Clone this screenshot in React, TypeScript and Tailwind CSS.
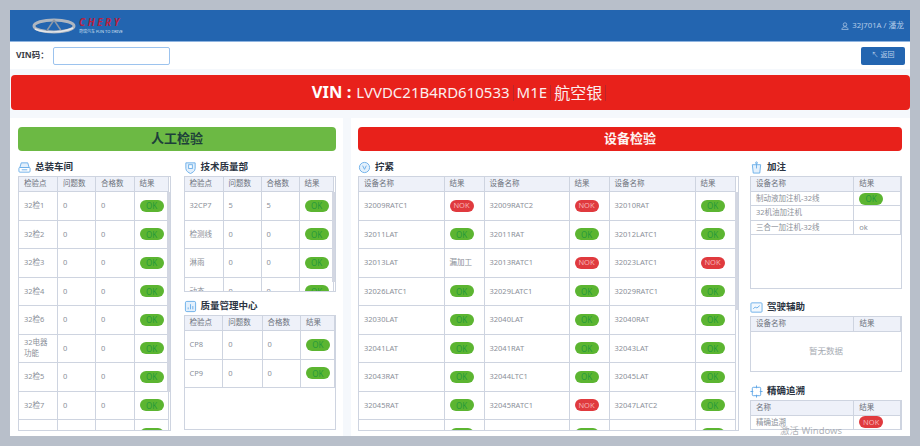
import React from 'react';

type Cell = string | { pill: 'OK' | 'NOK' };

const OK: Cell = { pill: 'OK' };
const NOK: Cell = { pill: 'NOK' };

function Pill({ kind }: { kind: 'OK' | 'NOK' }) {
  if (kind === 'OK') {
    return <span className="flex h-[12px] w-[24px] items-center justify-center rounded-full bg-[#5cb531] text-[8px] text-[#279a3c]">OK</span>;
  }
  return <span className="flex h-[12px] w-[24px] items-center justify-center rounded-full bg-[#e03a3e] text-[7.5px] text-[#f6b4b4]">NOK</span>;
}

function DataTable({ cols, head, rows, rowClass, boxClass, bar }: {
  cols: string[];
  head: string[];
  rows: Cell[][];
  rowClass: string;
  boxClass: string;
  bar?: string;
}) {
  return (
    <div className={`relative overflow-hidden border border-[#ced4e0] bg-white ${boxClass}`}>
      <table className="table-fixed border-collapse text-[7.5px] text-[#8b9099]">
        <colgroup>
          {cols.map((c, i) => <col key={i} className={c} />)}
        </colgroup>
        <thead>
          <tr className="h-[14.500px] bg-[#eef1f9] text-[#6d727c]">
            {head.map((h, i) => (
              <th key={i} className="border-r border-b border-[#ced4e0] pl-[5px] text-left font-normal">{h}</th>
            ))}
          </tr>
        </thead>
        <tbody>
          {rows.map((r, i) => (
            <tr key={i} className={rowClass}>
              {r.map((c, j) => (
                <td key={j} className="border-r border-b border-[#ced4e0] pl-[5px] pr-[4px] leading-[11px]">
                  {typeof c === 'string' ? c : <Pill kind={c.pill} />}
                </td>
              ))}
            </tr>
          ))}
        </tbody>
      </table>
      {bar && <div className={`absolute right-0 top-[15px] w-[3px] bg-[#d3d7e2] ${bar}`} />}
    </div>
  );
}

function Title({ icon, text }: { icon: React.ReactNode; text: string }) {
  return (
    <div className="flex h-[20px] items-center gap-[4px] pt-[2px] text-[9.5px] font-bold text-[#2b3442]">
      {icon}
      <span>{text}</span>
    </div>
  );
}

const iconClass = 'h-[13px] w-[13px] shrink-0 fill-[#e3f0fc] stroke-[#6aaee8]';

const BoxIcon = (
  <svg viewBox="0 0 14 14" className={iconClass} strokeWidth="1">
    <path d="M3.5 2h7L12 7H2z" />
    <rect x="1" y="7" width="12" height="5" rx="1" fill="#fff" />
    <path d="M4 9.5h6" />
  </svg>
);
const ShieldIcon = (
  <svg viewBox="0 0 14 14" className={iconClass} strokeWidth="1">
    <path d="M2 2h10v6c0 3-3 4.500-5 5.500C5 12.500 2 11 2 8z" />
    <rect x="5" y="4" width="4" height="4" fill="#fff" />
  </svg>
);
const ChartIcon = (
  <svg viewBox="0 0 14 14" className={iconClass} strokeWidth="1">
    <rect x="1.500" y="1.500" width="11" height="11" rx="1.500" />
    <path d="M4.500 10V8M7 10V4.500M9.500 10V6.500" />
  </svg>
);
const RoundIcon = (
  <svg viewBox="0 0 14 14" className={iconClass} strokeWidth="1">
    <circle cx="7" cy="7" r="5.500" />
    <path d="M5 5l2 4 2-4" fill="none" />
  </svg>
);
const BottleIcon = (
  <svg viewBox="0 0 14 14" className={iconClass} strokeWidth="1">
    <path d="M2.500 4h9l-1 9h-7z" />
    <path d="M7 1v7" />
    <circle cx="7" cy="2" r="1" />
  </svg>
);
const LineIcon = (
  <svg viewBox="0 0 14 14" className={iconClass} strokeWidth="1">
    <rect x="1" y="2" width="12" height="10" rx="1" fill="#f2f8fe" />
    <path d="M3.500 8.500l2-2 2 1 3-2.500" fill="none" />
  </svg>
);
const TargetIcon = (
  <svg viewBox="0 0 14 14" className="h-[13px] w-[13px] shrink-0 fill-none stroke-[#5da5e6]" strokeWidth="1">
    <rect x="2.500" y="2.500" width="9" height="9" rx="1" />
    <path d="M7 0.500v3M7 10.500v3M0.500 7h3M10.500 7h3" />
  </svg>
);

const zpRows: Cell[][] = [
  ['32检1', '0', '0', OK],
  ['32检2', '0', '0', OK],
  ['32检3', '0', '0', OK],
  ['32检4', '0', '0', OK],
  ['32检6', '0', '0', OK],
  ['32电器功能', '0', '0', OK],
  ['32检5', '0', '0', OK],
  ['32检7', '0', '0', OK],
  ['', '', '', OK],
];

const jsRows: Cell[][] = [
  ['32CP7', '5', '5', OK],
  ['检测线', '0', '0', OK],
  ['淋雨', '0', '0', OK],
  ['动态', '0', '0', OK],
];

const zlRows: Cell[][] = [
  ['CP8', '0', '0', OK],
  ['CP9', '0', '0', OK],
];

const tightRows: Cell[][] = [
  ['32009RATC1', NOK, '32009RATC2', NOK, '32010RAT', OK],
  ['32011LAT', OK, '32011RAT', OK, '32012LATC1', OK],
  ['32013LAT', '漏加工', '32013RATC1', NOK, '32023LATC1', NOK],
  ['32026LATC1', OK, '32029LATC1', OK, '32029RATC1', OK],
  ['32030LAT', OK, '32040LAT', OK, '32040RAT', OK],
  ['32041LAT', OK, '32041RAT', OK, '32043LAT', OK],
  ['32043RAT', OK, '32044LTC1', OK, '32045LAT', OK],
  ['32045RAT', OK, '32045RATC1', NOK, '32047LATC2', OK],
  ['', OK, '', OK, '', OK],
];

export default function App() {
  return (
    <div className="relative h-[446px] w-[920px] overflow-hidden bg-[#b8bfca] p-[10px] font-['Noto_Sans','Noto_Sans_CJK_SC',sans-serif]">
      <div className="flex h-full flex-col bg-[#f5f8fc]">
        {/* header */}
        <div className="flex h-[32px] shrink-0 items-center justify-between border-b border-[#8fb4e0] bg-[#2365b0] pl-[22px] pr-[6px]">
          <div className="flex items-center gap-[3px]">
            <svg viewBox="0 0 44 16" className="h-[16px] w-[44px]">
              <ellipse cx="22" cy="8" rx="20" ry="6" fill="none" stroke="#aeb6c0" strokeWidth="3" />
              <path d="M22 2L14 14M22 2l8 12" stroke="#8e98a5" strokeWidth="1.500" fill="none" />
              <path d="M3 11c8 4 28 4 38-1" stroke="#e3e6ea" strokeWidth="1.500" fill="none" />
            </svg>
            <div className="flex flex-col leading-none">
              <span className="text-[10px] font-bold italic leading-[10px] tracking-[2.500px] text-[#b8213f]">CHERY</span>
              <span className="mt-[2px] whitespace-nowrap text-[4px] leading-[5px] text-[#d7e3f2]">奇瑞汽车 FUN TO DRIVE</span>
            </div>
          </div>
          <div className="flex items-center gap-[3px] text-[7.75px] text-[#b3cbe8]">
            <svg viewBox="0 0 10 10" className="h-[8px] w-[8px] fill-none stroke-[#b3cbe8]" strokeWidth="0.900">
              <circle cx="5" cy="3.200" r="2.200" />
              <path d="M1 9.300c.6-2.400 2-3.300 4-3.300s3.400.9 4 3.300z" />
            </svg>
            <span>32J701A / 潘龙</span>
          </div>
        </div>

        {/* vin toolbar */}
        <div className="flex h-[27px] shrink-0 items-center justify-between bg-white pl-[6px] pr-[5px]">
          <div className="flex items-center">
            <span className="w-[37px] text-[8.5px] font-bold text-[#3c4048]">VIN码：</span>
            <input className="h-[18px] w-[117px] rounded-[2px] border border-[#9cc3ee] bg-white outline-none" />
          </div>
          <button className="flex h-[18px] w-[44px] items-center justify-center gap-[2px] rounded-[2px] bg-[#2365b0] text-[7px] text-[#b9d0ea]">
            <span>↖</span>
            <span>返回</span>
          </button>
        </div>

        {/* banner */}
        <div className="ml-px mt-[6px] flex h-[35px] shrink-0 items-center justify-center rounded-[4px] bg-[#e8211b] text-[15px] text-[#fbeeee]">
          <b className="mr-[5px] text-[16.500px] font-bold text-white">VIN :</b>
          <span>LVVDC21B4RD610533</span>
          <span className="mx-[3px] h-[16px] w-px bg-[#b9262a]" />
          <span>M1E</span>
          <span className="mx-[3px] h-[16px] w-px bg-[#b9262a]" />
          <span className="text-[16px]">航空银</span>
          <span className="mx-[3px] h-[16px] w-px bg-[#b9262a]" />
        </div>

        <div className="mt-[8px] flex min-h-0 flex-1 gap-[8px]">
          {/* manual inspection */}
          <div className="w-[333px] shrink-0 bg-white pl-[8px] pr-[7px] pt-[9px]">
            <div className="flex h-[24px] items-center justify-center rounded-[4px] bg-[#6cb944] text-[13px] font-bold text-[#1d3f3a]">人工检验</div>
            <div className="mt-[5px] flex gap-[13px]">
              <div className="w-[153px]">
                <Title icon={BoxIcon} text="总装车间" />
                <DataTable
                  cols={['w-[38.500px]', 'w-[38px]', 'w-[38.500px]', 'w-[33.500px]']}
                  head={['检验点', '问题数', '合格数', '结果']}
                  rows={zpRows}
                  rowClass="h-[28.500px]"
                  boxClass="h-[255px]"
                  bar="h-[200px]"
                />
              </div>
              <div className="w-[153px]">
                <Title icon={ShieldIcon} text="技术质量部" />
                <DataTable
                  cols={['w-[38.500px]', 'w-[38px]', 'w-[38px]', 'w-[33px]']}
                  head={['检验点', '问题数', '合格数', '结果']}
                  rows={jsRows}
                  rowClass="h-[28.500px]"
                  boxClass="h-[116px]"
                  bar="h-[90px]"
                />
                <div className="mt-[3px]">
                  <Title icon={ChartIcon} text="质量管理中心" />
                </div>
                <DataTable
                  cols={['w-[38.500px]', 'w-[40px]', 'w-[39px]', 'w-[33px]']}
                  head={['检验点', '问题数', '合格数', '结果']}
                  rows={zlRows}
                  rowClass="h-[28.500px]"
                  boxClass="h-[115px]"
                />
              </div>
            </div>
          </div>

          {/* equipment inspection */}
          <div className="min-w-0 flex-1 bg-white pl-[7px] pr-[8px] pt-[9px]">
            <div className="flex h-[24px] items-center justify-center rounded-[4px] bg-[#e8211b] text-[13px] font-bold text-[#fdf3f1]">设备检验</div>
            <div className="mt-[5px] flex gap-[11px]">
              <div className="w-[381px] shrink-0">
                <Title icon={RoundIcon} text="拧紧" />
                <DataTable
                  cols={['w-[85px]', 'w-[40px]', 'w-[85px]', 'w-[40px]', 'w-[86px]', 'w-[40px]']}
                  head={['设备名称', '结果', '设备名称', '结果', '设备名称', '结果']}
                  rows={tightRows}
                  rowClass="h-[28.500px]"
                  boxClass="h-[255px]"
                  bar="h-[118px]"
                />
              </div>
              <div className="w-[152px]">
                <Title icon={BottleIcon} text="加注" />
                <DataTable
                  cols={['w-[104px]', 'w-[47px]']}
                  head={['设备名称', '结果']}
                  rows={[
                    ['制动液加注机-32线', OK],
                    ['32机油加注机', ''],
                    ['三合一加注机-32线', 'ok'],
                  ]}
                  rowClass="h-[14.300px]"
                  boxClass="h-[113px]"
                />
                <div className="mt-[7px]">
                  <Title icon={LineIcon} text="驾驶辅助" />
                </div>
                <div className="relative">
                  <DataTable
                    cols={['w-[104px]', 'w-[47px]']}
                    head={['设备名称', '结果']}
                    rows={[]}
                    rowClass=""
                    boxClass="h-[56px]"
                  />
                  <div className="absolute inset-x-0 top-[15px] flex h-[40px] items-center justify-center text-[8.500px] text-[#a6abb3]">暂无数据</div>
                </div>
                <div className="mt-[8px]">
                  <Title icon={TargetIcon} text="精确追溯" />
                </div>
                <DataTable
                  cols={['w-[104px]', 'w-[47px]']}
                  head={['名称', '结果']}
                  rows={[['精确追溯', NOK]]}
                  rowClass="h-[13.500px]"
                  boxClass="h-[30px]"
                />
              </div>
            </div>
          </div>
        </div>
      </div>
      <div className="absolute left-[780px] top-[424px] text-[9.500px] text-[#9a9ea6]/80">激活 Windows</div>
    </div>
  );
}
